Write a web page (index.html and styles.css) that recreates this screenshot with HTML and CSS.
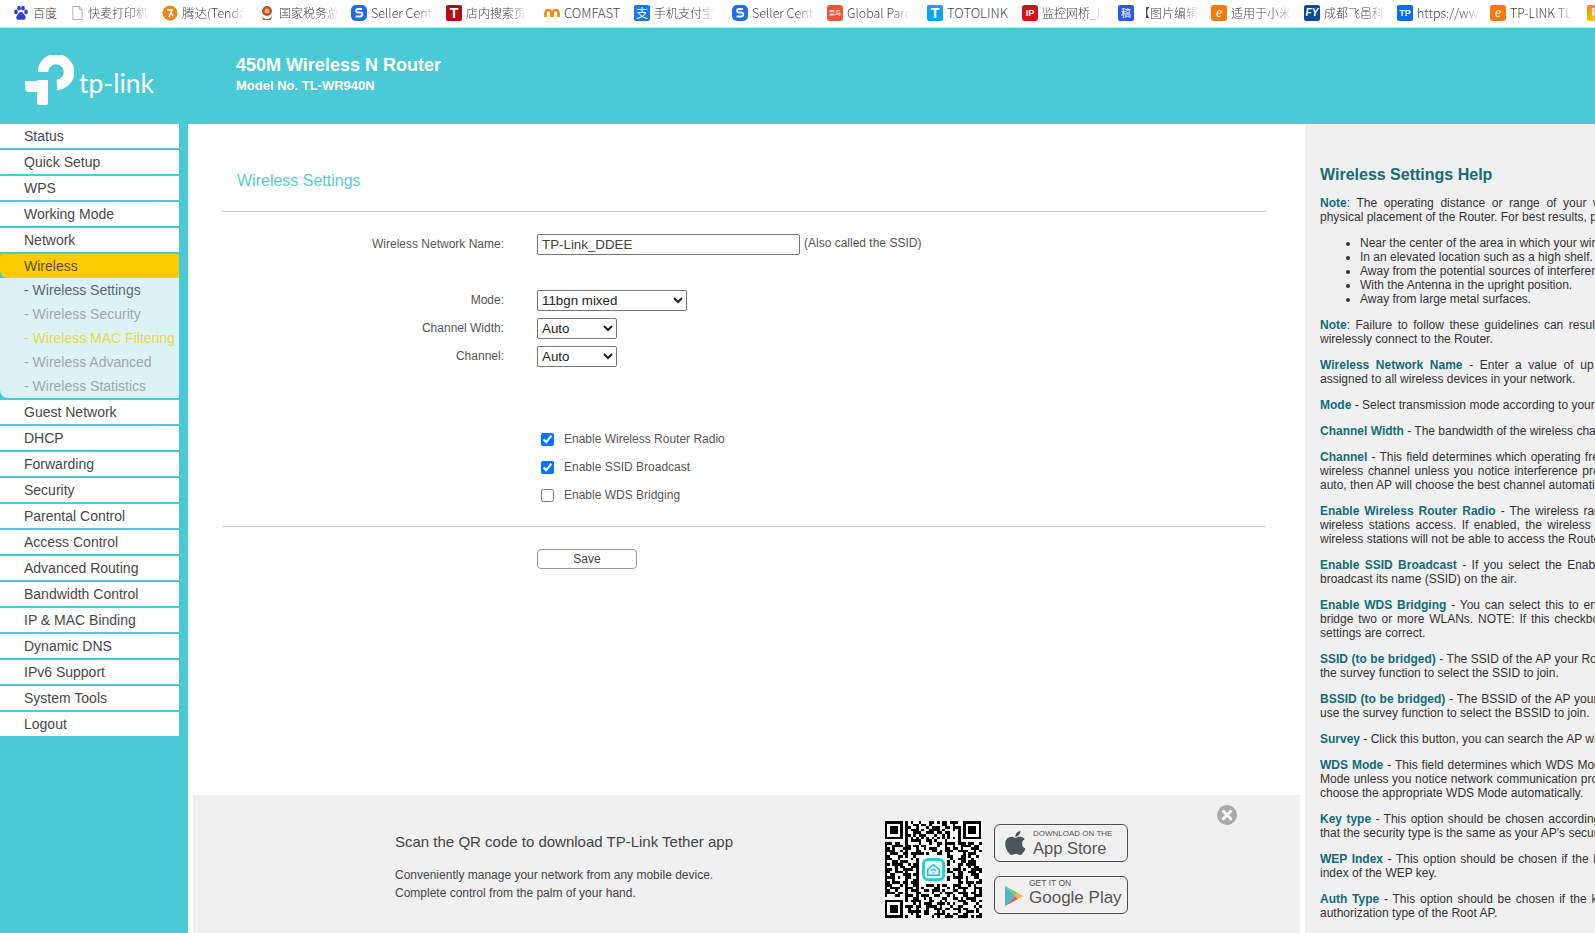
FILE: index.html
```html
<!DOCTYPE html>
<html lang="en">
<head>
<meta charset="utf-8">
<title>TL-WR940N</title>
<link rel="stylesheet" href="styles.css">
</head>
<body>
<nav class="bookmarks">
  <a class="bm w58"><svg class="fav" viewBox="0 0 16 16"><g fill="#2f3fc8"><ellipse cx="3" cy="7" rx="1.8" ry="2.4"/><ellipse cx="6" cy="3.2" rx="1.8" ry="2.4"/><ellipse cx="10" cy="3.2" rx="1.8" ry="2.4"/><ellipse cx="13" cy="7" rx="1.8" ry="2.4"/><path d="M8 7c-2 0-2.400 2-4 3.500C2.500 12.500 3.500 15 6 14.800c1-.1 1.500-.4 2-.4s1 .3 2 .4c2.500.2 3.500-2.300 2-4.300C10.400 9 10 7 8 7z"/></g></svg><span class="bt">百度</span></a>
  <a class="bm w91"><svg class="fav doc" viewBox="1 0 14 16"><path d="M3 1h7l3 3v11H3z" fill="#fff" stroke="#aaa"/><path d="M10 1v3h3" fill="none" stroke="#aaa"/></svg><span class="bt clip">快麦打印机</span></a>
  <a class="bm w97"><svg class="fav" viewBox="0 0 16 16"><circle cx="8" cy="8" r="7.500" fill="#e88a1a"/><path d="M5 5h5L7 12M9 8l2 3" fill="none" stroke="#fff" stroke-width="1.600"/></svg><span class="bt clip lat">腾达(Tenda</span></a>
  <a class="bm w92"><svg class="fav" viewBox="0 0 16 16"><circle cx="8" cy="6" r="5" fill="#b5533a"/><circle cx="8" cy="6" r="2.500" fill="#e6b450"/><path d="M3 11c2 4 8 4 10 0l-1 4H4z" fill="#8d7a50"/></svg><span class="bt clip">国家税务总</span></a>
  <a class="bm w95"><svg class="fav" viewBox="0 0 16 16"><rect width="16" height="16" rx="5" fill="#1b6fe0"/><path d="M11 4H7C4.500 4 4.500 7.500 7 7.500h2.500c2.500 0 2.500 4-.5 4H4.500" fill="none" stroke="#fff" stroke-width="1.800"/></svg><span class="bt clip lat">Seller Cent</span></a>
  <a class="bm w98"><span class="fav tx red">T</span><span class="bt clip">店内搜索页-</span></a>
  <a class="bm w90"><svg class="fav" viewBox="0 0 16 16"><path d="M1.500 12V8a3 3 0 0 1 6 0v4M8.500 12V8a3 3 0 0 1 6 0v4" fill="none" stroke="#f08a12" stroke-width="2.600"/></svg><span class="bt lat">COMFAST</span></a>
  <a class="bm w98"><span class="fav tx alipay">支</span><span class="bt clip">手机支付宝-</span></a>
  <a class="bm w95"><svg class="fav" viewBox="0 0 16 16"><rect width="16" height="16" rx="5" fill="#1b6fe0"/><path d="M11 4H7C4.500 4 4.500 7.500 7 7.500h2.500c2.500 0 2.500 4-.5 4H4.500" fill="none" stroke="#fff" stroke-width="1.800"/></svg><span class="bt clip lat">Seller Cent</span></a>
  <a class="bm w100"><span class="fav tx cainiao">菜鸟</span><span class="bt clip lat">Global Parc</span></a>
  <a class="bm w95"><span class="fav tx sky">T</span><span class="bt lat">TOTOLINK</span></a>
  <a class="bm w96"><span class="fav tx ip">IP</span><span class="bt clip">监控网桥_IP</span></a>
  <a class="bm w93"><span class="fav tx gao">稿</span><span class="bt clip">【图片编辑</span></a>
  <a class="bm w93"><span class="fav tx ali">e</span><span class="bt clip">适用于小米</span></a>
  <a class="bm w93"><span class="fav tx fy">FY</span><span class="bt clip">成都飞邑科</span></a>
  <a class="bm w93"><span class="fav tx tpb">TP</span><span class="bt clip lat">https://ww</span></a>
  <a class="bm w97"><span class="fav tx ali">e</span><span class="bt clip lat">TP-LINK TL</span></a>
  <a class="bm w8"><span class="fav tx last">P</span></a>
</nav>

<header class="top">
  <div class="logo">
    <svg class="logo-mark" viewBox="0 0 52 52" aria-hidden="true">
      <g fill="#fff"><path d="M13 25h11v23a2 2 0 0 1-2 2h-7a2 2 0 0 1-2-2z"/><path d="M1 26h23v11H5c-2.200 0-4-1.800-4-4z"/></g>
      <path d="M19 17A13 13 0 1 1 33 30" fill="none" stroke="#fff" stroke-width="10.500"/>
    </svg>
    <span class="logo-word">tp-link</span>
  </div>
  <div class="model">
    <h1>450M Wireless N Router</h1>
    <p>Model No. TL-WR940N</p>
  </div>
</header>

<div class="body-row">
  <aside class="side">
    <a class="mi">Status</a>
    <a class="mi">Quick Setup</a>
    <a class="mi">WPS</a>
    <a class="mi">Working Mode</a>
    <a class="mi">Network</a>
    <a class="mi active">Wireless</a>
    <div class="sub">
      <a class="si cur">- Wireless Settings</a>
      <a class="si">- Wireless Security</a>
      <a class="si hot">- Wireless MAC Filtering</a>
      <a class="si">- Wireless Advanced</a>
      <a class="si">- Wireless Statistics</a>
    </div>
    <a class="mi">Guest Network</a>
    <a class="mi">DHCP</a>
    <a class="mi">Forwarding</a>
    <a class="mi">Security</a>
    <a class="mi">Parental Control</a>
    <a class="mi">Access Control</a>
    <a class="mi">Advanced Routing</a>
    <a class="mi">Bandwidth Control</a>
    <a class="mi">IP &amp; MAC Binding</a>
    <a class="mi">Dynamic DNS</a>
    <a class="mi">IPv6 Support</a>
    <a class="mi">System Tools</a>
    <a class="mi">Logout</a>
  </aside>

  <main class="main">
    <h2 class="title">Wireless Settings</h2>
    <div class="rule"></div>
    <form class="form">
      <div class="row first">
        <label class="lab">Wireless Network Name:</label>
        <input class="ssid" type="text" value="TP-Link_DDEE">
        <span class="hint">(Also called the SSID)</span>
      </div>
      <div class="row mode">
        <label class="lab">Mode:</label>
        <select class="sel wide"><option>11bgn mixed</option></select>
      </div>
      <div class="row">
        <label class="lab">Channel Width:</label>
        <select class="sel"><option>Auto</option></select>
      </div>
      <div class="row">
        <label class="lab">Channel:</label>
        <select class="sel"><option>Auto</option></select>
      </div>
      <div class="row checks">
        <span></span>
        <label class="chk"><input type="checkbox" checked>Enable Wireless Router Radio</label>
      </div>
      <div class="row">
        <span></span>
        <label class="chk"><input type="checkbox" checked>Enable SSID Broadcast</label>
      </div>
      <div class="row">
        <span></span>
        <label class="chk"><input type="checkbox">Enable WDS Bridging</label>
      </div>
    </form>
    <div class="rule rule2"></div>
    <div class="save-row"><button class="save" type="button">Save</button></div>

    <section class="banner">
      <div class="b-text">
        <h3>Scan the QR code to download TP-Link Tether app</h3>
        <p>Conveniently manage your network from any mobile device.<br>Complete control from the palm of your hand.</p>
      </div>
      <div class="qr">
        <svg viewBox="0 0 37 37" shape-rendering="crispEdges" aria-hidden="true">
          <rect width="37" height="37" fill="#fff"/>
          <g stroke="#000" stroke-width="1">
            <path d="M0 .5H37" stroke-dasharray="2 1 3 2 1 1 1"/>
            <path d="M0 1.500H37" stroke-dasharray="1 2 1 1 4 2 2"/>
            <path d="M0 2.500H37" stroke-dasharray="3 1 1 3 2 2 1"/>
            <path d="M0 3.500H37" stroke-dasharray="1 1 2 4 1 1 3"/>
            <path d="M0 4.500H37" stroke-dasharray="2 3 1 2 1 2 3"/>
            <path d="M0 5.500H37" stroke-dasharray="1 3 3 1 2 1 1"/>
            <path d="M0 6.500H37" stroke-dasharray="1 1"/>
            <path d="M0 7.500H37" stroke-dasharray="2 2 1 1 3 1 4"/>
            <path d="M0 8.500H37" stroke-dasharray="3 1 2 2 1 4 1"/>
            <path d="M0 9.500H37" stroke-dasharray="1 2 4 1 2 1 2"/>
            <path d="M0 10.500H37" stroke-dasharray="2 1 1 3 3 2 1"/>
            <path d="M0 11.500H37" stroke-dasharray="4 2 1 1 1 3 2"/>
            <path d="M0 12.500H37" stroke-dasharray="1 1 3 2 2 1 5"/>
            <path d="M0 13.500H37" stroke-dasharray="2 3 2 1 1 2 1"/>
            <path d="M0 14.500H37" stroke-dasharray="3 2 1 4 1 1 2"/>
            <path d="M0 15.500H37" stroke-dasharray="1 2 2 1 3 3 1"/>
            <path d="M0 16.500H37" stroke-dasharray="2 1 4 2 1 1 3"/>
            <path d="M0 17.500H37" stroke-dasharray="1 3 1 1 2 2 4"/>
            <path d="M0 18.500H37" stroke-dasharray="3 1 1 2 4 1 1"/>
            <path d="M0 19.500H37" stroke-dasharray="2 2 3 1 1 3 2"/>
            <path d="M0 20.500H37" stroke-dasharray="1 1 2 3 3 1 2"/>
            <path d="M0 21.500H37" stroke-dasharray="4 1 1 2 2 2 1"/>
            <path d="M0 22.500H37" stroke-dasharray="1 2 1 4 1 2 3"/>
            <path d="M0 23.500H37" stroke-dasharray="2 1 3 1 2 1 4"/>
            <path d="M0 24.500H37" stroke-dasharray="3 3 1 1 1 2 2"/>
            <path d="M0 25.500H37" stroke-dasharray="1 1 4 2 3 1 1"/>
            <path d="M0 26.500H37" stroke-dasharray="2 2 1 3 1 1 3"/>
            <path d="M0 27.500H37" stroke-dasharray="4 1 2 1 1 3 2"/>
            <path d="M0 28.500H37" stroke-dasharray="1 3 2 2 3 1 1"/>
            <path d="M0 29.500H37" stroke-dasharray="2 1 1 1 4 2 2"/>
            <path d="M0 30.500H37" stroke-dasharray="3 2 2 1 1 1 4"/>
            <path d="M0 31.500H37" stroke-dasharray="1 1 1 3 2 3 1"/>
            <path d="M0 32.500H37" stroke-dasharray="2 4 1 1 3 1 2"/>
            <path d="M0 33.500H37" stroke-dasharray="3 1 2 3 1 2 1"/>
            <path d="M0 34.500H37" stroke-dasharray="1 2 3 1 1 1 5"/>
            <path d="M0 35.500H37" stroke-dasharray="2 2 2 4 1 1 1"/>
            <path d="M0 36.500H37" stroke-dasharray="4 1 1 1 2 3 2"/>
          </g>
          <g fill="#fff"><rect width="8" height="8"/><rect x="29" width="8" height="8"/><rect y="29" width="8" height="8"/><rect x="13" y="13" width="11" height="11"/></g>
          <g fill="none" stroke="#000"><rect x=".5" y=".5" width="6" height="6"/><rect x="30.500" y=".5" width="6" height="6"/><rect x=".5" y="30.500" width="6" height="6"/></g>
          <g fill="#000"><rect x="2" y="2" width="3" height="3"/><rect x="32" y="2" width="3" height="3"/><rect x="2" y="32" width="3" height="3"/></g>
        </svg>
        <svg class="qr-app" viewBox="0 0 24 24" aria-hidden="true">
          <rect x="1.500" y="1.500" width="21" height="21" rx="4.500" fill="#e4fafc" stroke="#2ecad6" stroke-width="3"/>
          <path d="M6 12l6-5 6 5v6H6z" fill="none" stroke="#27bcc9" stroke-width="1.600"/>
          <path d="M9.500 13a4 4 0 0 1 5 0M11 15.500h2" fill="none" stroke="#27bcc9" stroke-width="1.300"/>
        </svg>
      </div>
      <div class="badges">
        <div class="badge apple">
          <svg class="bi" viewBox="3.500 3 16.500 18"><path fill="#4a5558" d="M17.050 20.280c-.98.95-2.050.8-3.080.35-1.090-.46-2.090-.48-3.240 0-1.440.62-2.200.44-3.060-.35C2.790 15.250 3.510 7.590 9.050 7.310c1.350.07 2.290.74 3.080.8 1.180-.24 2.310-.93 3.570-.84 1.510.12 2.650.72 3.400 1.800-3.120 1.870-2.380 5.980.48 7.130-.57 1.500-1.310 2.990-2.540 4.090zM12.030 7.250c-.15-2.230 1.660-4.070 3.740-4.250.29 2.580-2.340 4.500-3.740 4.250z"/></svg>
          <div class="bl"><small>DOWNLOAD ON THE</small><b>App Store</b></div>
        </div>
        <div class="badge play">
          <svg class="bi2" viewBox="0 0 20 22"><path d="M1 1l10 10L1 21z" fill="#4cb6cf"/><path d="M1 1l13 7-3 3z" fill="#8ac06a"/><path d="M1 21l13-7-3-3z" fill="#d8596a"/><path d="M14 8l5 3-5 3-3-3z" fill="#f2b04d"/></svg>
          <div class="bl"><small>GET IT ON</small><b>Google Play</b></div>
        </div>
      </div>
      <svg class="close" viewBox="0 0 20 20" aria-hidden="true"><circle cx="10" cy="10" r="10" fill="#a9a9a9"/><path d="M6.300 6.300l7.400 7.400M13.700 6.300l-7.400 7.400" stroke="#fff" stroke-width="3" stroke-linecap="round"/></svg>
    </section>
  </main>

  <aside class="help">
    <div class="help-in">
      <h2>Wireless Settings Help</h2>
      <p><span class="jl"><b>Note</b>: The operating distance or range of your wireless connection varies significantly based on the</span> physical placement of the Router. For best results, place your Router:</p>
      <ul>
        <li>Near the center of the area in which your wireless stations operate.</li>
        <li>In an elevated location such as a high shelf.</li>
        <li>Away from the potential sources of interference, such as PCs, microwaves, and cordless phones.</li>
        <li>With the Antenna in the upright position.</li>
        <li>Away from large metal surfaces.</li>
      </ul>
      <p><b>Note</b>: Failure to follow these guidelines can result in significant performance degradation or inability to wirelessly connect to the Router.</p>
      <p><span class="jl"><b>Wireless Network Name</b> - Enter a value of up to 32 characters. The same name (SSID) must be</span> assigned to all wireless devices in your network.</p>
      <p><b>Mode</b> - Select transmission mode according to your wireless client devices.</p>
      <p><b>Channel Width</b> - The bandwidth of the wireless channel.</p>
      <p><b>Channel</b> - This field determines which operating frequency will be used. It is not necessary to change the wireless channel unless you notice interference problems with another nearby access point. If you select auto, then AP will choose the best channel automatically.</p>
      <p><b>Enable Wireless Router Radio</b> - The wireless radio of the Router can be enabled or disabled to allow wireless stations access. If enabled, the wireless stations will be able to access the Router, otherwise, wireless stations will not be able to access the Router.</p>
      <p><b>Enable SSID Broadcast</b> - If you select the Enable SSID Broadcast checkbox, the wireless Router will broadcast its name (SSID) on the air.</p>
      <p><b>Enable WDS Bridging</b> - You can select this to enable WDS Bridging, with this function, the Router can bridge two or more WLANs. NOTE: If this checkbox is selected, you had better make sure the following settings are correct.</p>
      <p><b>SSID (to be bridged)</b> - The SSID of the AP your Router is going to connect to as a client. You can also use the survey function to select the SSID to join.</p>
      <p><span class="jl"><b>BSSID (to be bridged)</b> - The BSSID of the AP your Router is going to connect to as a client. You can also</span> use the survey function to select the BSSID to join.</p>
      <p><b>Survey</b> - Click this button, you can search the AP which runs in the current channel.</p>
      <p><b>WDS Mode</b> - This field determines which WDS Mode will be used. It is not necessary to change the WDS Mode unless you notice network communication problems with the Root AP. If you select Auto, then AP will choose the appropriate WDS Mode automatically.</p>
      <p><b>Key type</b> - This option should be chosen according to the AP's security configuration. It is recommended that the security type is the same as your AP's security type.</p>
      <p><b>WEP Index</b> - This option should be chosen if the key type is WEP(ASCII) or WEP(HEX). It indicates the index of the WEP key.</p>
      <p><b>Auth Type</b> - This option should be chosen if the key type is WEP(ASCII) or WEP(HEX). It indicates the authorization type of the Root AP.</p>
    </div>
  </aside>
</div>
</body>
</html>
```
FILE: styles.css
```css
* { box-sizing: border-box; }
html, body { margin: 0; height: 933px; overflow: hidden; }
body {
  font-family: "Liberation Sans", Arial, sans-serif;
  background: #fff;
  color: #333;
  display: flex;
  flex-direction: column;
}

/* bookmark bar */
.bookmarks {
  height: 28px;
  flex: none;
  display: flex;
  align-items: center;
  padding: 0 0 2px 13px;
  background: #fff;
  border-bottom: 1px solid #e2e2e2;
  overflow: hidden;
  font-family: "Noto Sans CJK SC", "Noto Sans", sans-serif;
  font-size: 12px;
  font-weight: 300;
  color: #444;
}
.bm { display: flex; align-items: center; gap: 4px; flex: none; overflow: hidden; }
.w8 { width: 8px; overflow: visible; }
.w58 { width: 58px; } .w90 { width: 90px; } .w91 { width: 91px; } .w92 { width: 92px; }
.w93 { width: 93px; } .w95 { width: 95px; } .w96 { width: 96px; } .w97 { width: 97px; }
.w98 { width: 98px; } .w100 { width: 100px; }
.fav { width: 16px; height: 16px; flex: none; display: block; }
.fav.doc { width: 13px; }
.tx {
  display: flex; align-items: center; justify-content: center;
  border-radius: 2px; color: #fff;
  font: bold 11px/16px "Liberation Sans", sans-serif;
  overflow: hidden;
}
.red { background: #b40d17; font-size: 14px; }
.alipay { background: #1c78e8; font: 12px/16px "Noto Sans CJK SC", sans-serif; }
.cainiao { background: #e8563a; font: 6px/16px "Noto Sans CJK SC", sans-serif; border-radius: 3px; }
.sky { background: #12a4ea; font-size: 14px; }
.ip { background: #d3101c; font-size: 9px; border-radius: 3px; }
.gao { background: #2a58e0; font: 10px/16px "Noto Sans CJK SC", sans-serif; }
.ali { background: #f57a0c; font: italic 14px/16px "Liberation Serif", serif; border-radius: 3px; }
.fy { background: #0c4c96; font: italic bold 10px/16px "Liberation Sans", sans-serif; }
.tpb { background: #0a6ce8; font-size: 9px; }
.last { background: linear-gradient(135deg, #e8821a, #ffe030); font-size: 10px; }
.bt { white-space: nowrap; }
.lat { font-size: 13px; }
.clip {
  width: 61px;
  overflow: hidden;
  -webkit-mask-image: linear-gradient(to right, #000 72%, transparent);
  mask-image: linear-gradient(to right, #000 72%, transparent);
}
.clip.lat { font-size: 12.500px; width: 63px; }

/* header */
.top {
  height: 96px;
  flex: none;
  background: #4acad7;
  display: flex;
  color: #fff;
}
.logo { width: 236px; position: relative; padding: 27px 0 0 24px; display: flex; align-items: flex-start; }
.logo-mark { width: 52px; height: 52px; flex: none; }
.logo-word {
  font-family: Lato, "Open Sans", sans-serif;
  font-weight: 400;
  font-size: 26.500px;
  line-height: 32px;
  margin: 12px 0 0 3px;
}
.model { padding-top: 27px; }
.model h1 { margin: 0; font-size: 18px; line-height: 20px; font-weight: bold; }
.model p { margin: 1px 0 0; font-size: 13px; line-height: 20px; font-weight: bold; }

/* layout */
.body-row { flex: 1; display: flex; min-height: 0; }

/* sidebar */
.side {
  width: 188px;
  flex: none;
  background: #4acad7;
  padding-right: 9px;
  display: flex;
  flex-direction: column;
}
.mi {
  display: block;
  height: 24px;
  line-height: 24px;
  background: #fff;
  margin-bottom: 2px;
  padding-left: 24px;
  font-size: 14px;
  color: #484848;
}
.mi.active { background: #ffcc00; margin-bottom: 0; color: #5c4c08; border-radius: 3px 0 0 8px; }
.sub {
  background: #dcf3f6;
  border-radius: 0 0 0 8px;
  margin-bottom: 2px;
}
.si {
  display: block;
  height: 24px;
  line-height: 24px;
  padding-left: 24px;
  font-size: 14px;
  color: #99aab0;
  white-space: nowrap;
}
.si.cur { color: #5a6a72; }
.si.hot { color: #e8d84a; }

/* main */
.main { flex: 1; min-width: 0; display: flex; flex-direction: column; background: #fff; }
.title {
  margin: 47px 0 20px 49px;
  font-size: 16px;
  line-height: 20px;
  font-weight: normal;
  color: #63c6d8;
}
.rule { height: 1px; background: #ccc; margin: 0 39px 0 34px; flex: none; }
.form { padding: 22px 0 0 34px; }
.row {
  display: flex;
  align-items: center;
  height: 21px;
  margin-bottom: 7px;
}
.row.first { margin-bottom: 35px; }
.row.checks { margin-top: 61px; }
.row > :first-child { width: 282px; flex: none; margin-right: 33px; }
.form .row:last-child { margin-bottom: 21px; }
.lab { text-align: right; font-size: 12px; color: #555; padding-bottom: 2px; }
.ssid {
  width: 263px;
  height: 21px;
  margin: 0;
  padding: 0 4px;
  border: 1px solid #777;
  border-radius: 2px;
  font: 13.333px "Liberation Sans", sans-serif;
  color: #444;
}
.hint { font-size: 12px; color: #555; margin: -4px 0 0 4px; }
.sel {
  width: 80px;
  height: 21px;
  margin: 0;
  font: 13.333px "Liberation Sans", sans-serif;
  color: #222;
  background: #fff;
  border: 1px solid #767676;
  border-radius: 2px;
}
.sel.wide { width: 150px; }
.chk { display: flex; align-items: center; gap: 10px; padding-left: 4px; font-size: 12px; color: #555; }
.chk input { width: 13px; height: 13px; margin: 2px 0 0; flex: none; }
.save-row { padding: 22px 0 0 349px; }
.save {
  display: block;
  width: 100px;
  height: 20px;
  padding: 0;
  background: #fff;
  border: 1px solid #999;
  border-radius: 4px;
  font: 12px "Liberation Sans", sans-serif;
  color: #444;
}

/* banner */
.banner {
  margin: auto 5px 0;
  height: 138px;
  flex: none;
  background: #f0f0f0;
  position: relative;
  display: flex;
  align-items: flex-start;
  padding: 26px 0 0 202px;
  color: #444;
}
.b-text { width: 488px; flex: none; padding-top: 11px; }
.b-text h3 { margin: 0; font-size: 15px; line-height: 20px; font-weight: normal; }
.b-text p { margin: 14px 0 0; font-size: 12px; line-height: 18px; }
.qr { width: 100px; height: 97px; flex: none; position: relative; }
.qr > svg:first-child { width: 100%; height: 100%; display: block; }
.qr-app { position: absolute; left: 39px; top: 37px; width: 23px; height: 23px; }
.badges { margin: 3px 0 0 11px; width: 134px; display: flex; flex-direction: column; gap: 14px; }
.badge {
  height: 38px;
  border: 1px solid #4c4c4c;
  border-radius: 6px;
  display: flex;
  align-items: center;
  color: #555;
}
.bi { width: 22px; height: 26px; margin: 0 7px 0 9px; flex: none; }
.bi2 { width: 20px; height: 22px; margin: 2px 5px 0 9px; flex: none; }
.bl { display: flex; flex-direction: column; white-space: nowrap; }
.apple .bl { margin-top: 2px; }
.play .bl { margin-top: -2px; }
.bl small { font-size: 8px; line-height: 9px; margin-top: -1px; }
.bl b { font-size: 16.500px; line-height: 20px; font-weight: normal; }
.play small { font-size: 8.500px; }
.play b { font-size: 17px; }
.close { position: absolute; left: 1024px; top: 10px; width: 20px; height: 20px; }

/* help */
.help { width: 290px; flex: none; background: #f0f0f0; overflow: hidden; }
.help-in { width: 586px; padding: 41px 0 0 15px; font-size: 12px; line-height: 14px; color: #333; text-align: justify; }
.help-in h2 { margin: 0 0 11px; font-size: 16px; line-height: 20px; font-weight: bold; color: #136c78; text-align: left; }
.help-in p { margin: 0 0 12px; }
.help-in b { color: #136c78; }
.help-in ul { margin: 0 0 12px; padding-left: 40px; white-space: nowrap; text-align: left; }
.jl { display: block; text-align-last: justify; }
```
